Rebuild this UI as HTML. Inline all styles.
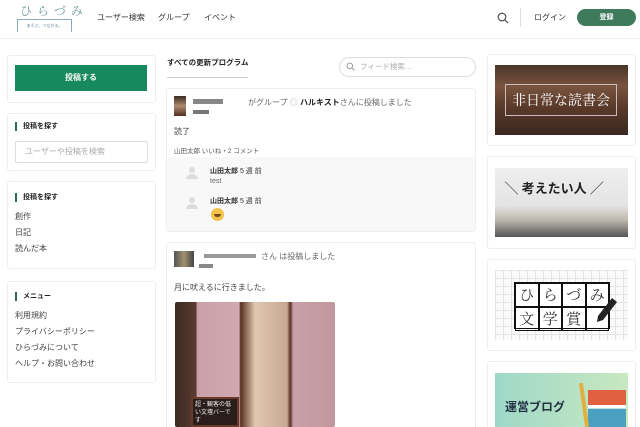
<!DOCTYPE html>
<html><head><meta charset="utf-8"><style>
*{box-sizing:border-box;margin:0;padding:0}
html,body{width:640px;height:427px;overflow:hidden}
body{background:#fff;font-family:"Liberation Sans","Noto Sans CJK JP",sans-serif;color:#333;position:relative;font-size:8px}
.a{position:absolute}
.card{position:absolute;background:#fff;border:1px solid #eee;border-radius:3px}
.h{font-size:7px;font-weight:bold;border-left:2px solid #2f6b52;padding-left:6px;line-height:9px;color:#222}
.lk{font-size:8px;color:#444;line-height:16px}
.g span{border:.5px solid #111;font-size:15px;text-align:center;line-height:22px;font-family:'Noto Serif CJK SC',serif}
</style></head><body>
<div class="a" style="left:0;top:38px;width:640px;height:1px;background:#eee"></div>
<div class="a" style="left:20px;top:2px;font-size:12px;color:#6a9a9a;letter-spacing:5px;font-family:'Noto Serif CJK SC',serif">ひらづみ</div>
<div class="a" style="left:17px;top:19px;width:55px;height:13px;border:1px solid #8ab;border-bottom:none;font-size:4px;color:#6a8a9a;text-align:center;line-height:12px">あそぶ、つながる。</div>
<div class="a" style="left:97px;top:12px;font-size:8px;color:#333">ユーザー検索</div>
<div class="a" style="left:158px;top:12px;font-size:8px;color:#333">グループ</div>
<div class="a" style="left:204px;top:12px;font-size:8px;color:#333">イベント</div>
<svg class="a" style="left:497px;top:12px" width="12" height="12" viewBox="0 0 12 12"><circle cx="5" cy="5" r="3.8" fill="none" stroke="#444" stroke-width="1.1"/><path d="M8 8l3 3" stroke="#444" stroke-width="1.2"/></svg>
<div class="a" style="left:520px;top:8px;width:1px;height:19px;background:#ddd"></div>
<div class="a" style="left:534px;top:12px;font-size:8px;color:#333">ログイン</div>
<div class="a" style="left:577px;top:9px;width:59px;height:17px;border-radius:9px;background:#3f7a5c;color:#fff;font-size:7px;font-weight:bold;text-align:center;line-height:17px">登録</div>
<div class="card" style="left:7px;top:55px;width:149px;height:48px"></div>
<div class="a" style="left:15px;top:65px;width:132px;height:26px;background:#168a5e;color:#fff;font-size:8px;font-weight:bold;text-align:center;line-height:26px">投稿する</div>
<div class="card" style="left:7px;top:113px;width:149px;height:58px"></div>
<div class="a h" style="left:15px;top:122px">投稿を探す</div>
<div class="a" style="left:15px;top:141px;width:133px;height:22px;border:1px solid #ddd;border-radius:2px;font-size:8px;color:#aaa;padding-left:9px;line-height:20px">ユーザーや投稿を検索</div>
<div class="card" style="left:7px;top:181px;width:149px;height:88px"></div>
<div class="a h" style="left:15px;top:193px">投稿を探す</div>
<div class="a lk" style="left:15px;top:209px">創作<br>日記<br>読んだ本</div>
<div class="card" style="left:7px;top:281px;width:149px;height:102px"></div>
<div class="a h" style="left:15px;top:292px">メニュー</div>
<div class="a lk" style="left:15px;top:308px">利用規約<br>プライバシーポリシー<br>ひらづみについて<br>ヘルプ・お問い合わせ</div>
<div class="a" style="left:167px;top:57px;font-size:7.5px;font-weight:bold;color:#222">すべての更新プログラム</div>
<div class="a" style="left:167px;top:77px;width:81px;height:1px;background:#ccc"></div>
<div class="a" style="left:339px;top:57px;width:137px;height:20px;border:1px solid #ddd;border-radius:10px;font-size:7.5px;color:#aaa;padding-left:20px;line-height:18px">フィード検索…</div>
<svg class="a" style="left:346px;top:62px" width="9" height="9" viewBox="0 0 9 9"><circle cx="3.8" cy="3.8" r="2.8" fill="none" stroke="#999"/><path d="M6 6l2.5 2.5" stroke="#999"/></svg>
<div class="card" style="left:166px;top:88px;width:310px;height:144px"></div>
<div class="a" style="left:174px;top:96px;width:12px;height:20px;background:linear-gradient(#3a2a20,#b08a70 50%,#503020)"></div>
<div class="a" style="left:193px;top:99px;width:30px;height:5px;background:#888"></div>
<div class="a" style="left:193px;top:110px;width:16px;height:4px;background:#777"></div>
<div class="a" style="left:248px;top:97px;font-size:8px;color:#666">がグループ <span style="color:#bbb">◎</span> <b style="color:#222">ハルキスト</b>さんに投稿しました</div>
<div class="a" style="left:174px;top:126px;font-size:8px;color:#444">読了</div>
<div class="a" style="left:174px;top:145px;font-size:6.5px;color:#555">山田太郎 いいね・2 コメント</div>
<div class="a" style="left:167px;top:157px;width:308px;height:74px;background:#f8f8f9"></div>
<svg class="a" style="left:186px;top:166px" width="12" height="14" viewBox="0 0 12 14"><circle cx="6" cy="4" r="3" fill="#ddd"/><path d="M0 13a6 5 0 0 1 12 0z" fill="#ddd"/></svg>
<div class="a" style="left:210px;top:166px;font-size:7px;color:#333"><b>山田太郎</b> 5 週 前</div>
<div class="a" style="left:210px;top:178px;font-size:7px;color:#666">test</div>
<svg class="a" style="left:186px;top:196px" width="12" height="14" viewBox="0 0 12 14"><circle cx="6" cy="4" r="3" fill="#ddd"/><path d="M0 13a6 5 0 0 1 12 0z" fill="#ddd"/></svg>
<div class="a" style="left:210px;top:196px;font-size:7px;color:#333"><b>山田太郎</b> 5 週 前</div>
<div class="a" style="left:211px;top:208px;width:13px;height:13px;border-radius:50%;background:#f2c24a"></div>
<div class="a" style="left:214px;top:214px;width:7px;height:3px;border-radius:0 0 4px 4px;background:#7a4a20"></div>
<div class="card" style="left:166px;top:242px;width:310px;height:200px"></div>
<div class="a" style="left:174px;top:251px;width:20px;height:16px;background:linear-gradient(90deg,#555,#a09070,#444)"></div>
<div class="a" style="left:204px;top:254px;width:52px;height:4px;background:#999"></div>
<div class="a" style="left:199px;top:264px;width:14px;height:4px;background:#888"></div>
<div class="a" style="left:261px;top:251px;font-size:8px;color:#666">さん は投稿しました</div>
<div class="a" style="left:174px;top:282px;font-size:8px;color:#444">月に吠えるに行きました。</div>
<div class="a" style="left:175px;top:302px;width:160px;height:125px;background:linear-gradient(90deg,#3a2a22 0,#5a3a30 13%,#c9a0a8 14%,#d0aab0 40%,#5a3020 41%,#e0c8b0 50%,#c8a890 70%,#5a3020 72%,#c9a0a8 74%,#c0989c 100%);border-radius:2px"></div>
<div class="a" style="left:191px;top:397px;width:48px;height:30px;background:#2a1e1a;border:2px solid #6a3a28;color:#eee;font-size:6px;line-height:8px;padding:2px;overflow:hidden">超・観客の低い文壇バーです</div>
<div class="card" style="left:487px;top:54px;width:149px;height:92px"></div>
<div class="a" style="left:495px;top:65px;width:133px;height:70px;background:linear-gradient(#4a3428,#7a5440 30%,#5a3a2a 60%,#3a2820);"></div>
<div class="a" style="left:505px;top:84px;width:112px;height:32px;border:1px solid #cbb;color:#fff;font-size:14px;text-align:center;line-height:30px;white-space:nowrap;font-family:'Noto Serif CJK SC',serif">非日常な読書会</div>
<div class="card" style="left:487px;top:156px;width:149px;height:93px"></div>
<div class="a" style="left:495px;top:168px;width:133px;height:69px;background:linear-gradient(#eee,#e4e4e4 55%,#bfb8ae 75%,#555 100%)"></div>
<div class="a" style="left:505px;top:178px;font-size:13px;font-weight:bold;color:#222;white-space:nowrap">╲ 考えたい人 ╱</div>
<div class="card" style="left:487px;top:259px;width:149px;height:92px"></div>
<div class="a" style="left:495px;top:270px;width:133px;height:70px;background:#fafafa;background-image:linear-gradient(#e4e4e4 1px,transparent 1px),linear-gradient(90deg,#e4e4e4 1px,transparent 1px);background-size:8px 8px"></div>
<div class="a g" style="left:514px;top:282px;width:96px;height:47px;display:grid;grid-template-columns:repeat(4,1fr);grid-template-rows:1fr 1fr;border:1.5px solid #111;background:#fff"><span>ひ</span><span>ら</span><span>づ</span><span>み</span><span>文</span><span>学</span><span>賞</span><span></span></div>
<svg class="a" style="left:594px;top:296px" width="24" height="28" viewBox="0 0 24 28"><path d="M18 2l5 4-14 18-6 2 1-6z" fill="#222"/></svg>
<div class="card" style="left:487px;top:361px;width:149px;height:80px"></div>
<div class="a" style="left:495px;top:373px;width:133px;height:60px;background:linear-gradient(90deg,#9fd8c8,#c8e8c0)"></div>
<div class="a" style="left:505px;top:398px;font-size:12px;font-weight:bold;color:#234">運営ブログ</div>
<div class="a" style="left:588px;top:390px;width:38px;height:37px;background:linear-gradient(#e06040 0,#e06040 40%,#fff 41%,#fff 50%,#4aa0c0 51%)"></div>
<div class="a" style="left:582px;top:383px;width:4px;height:44px;background:#e0b040;transform:rotate(-8deg)"></div>
</body></html>
